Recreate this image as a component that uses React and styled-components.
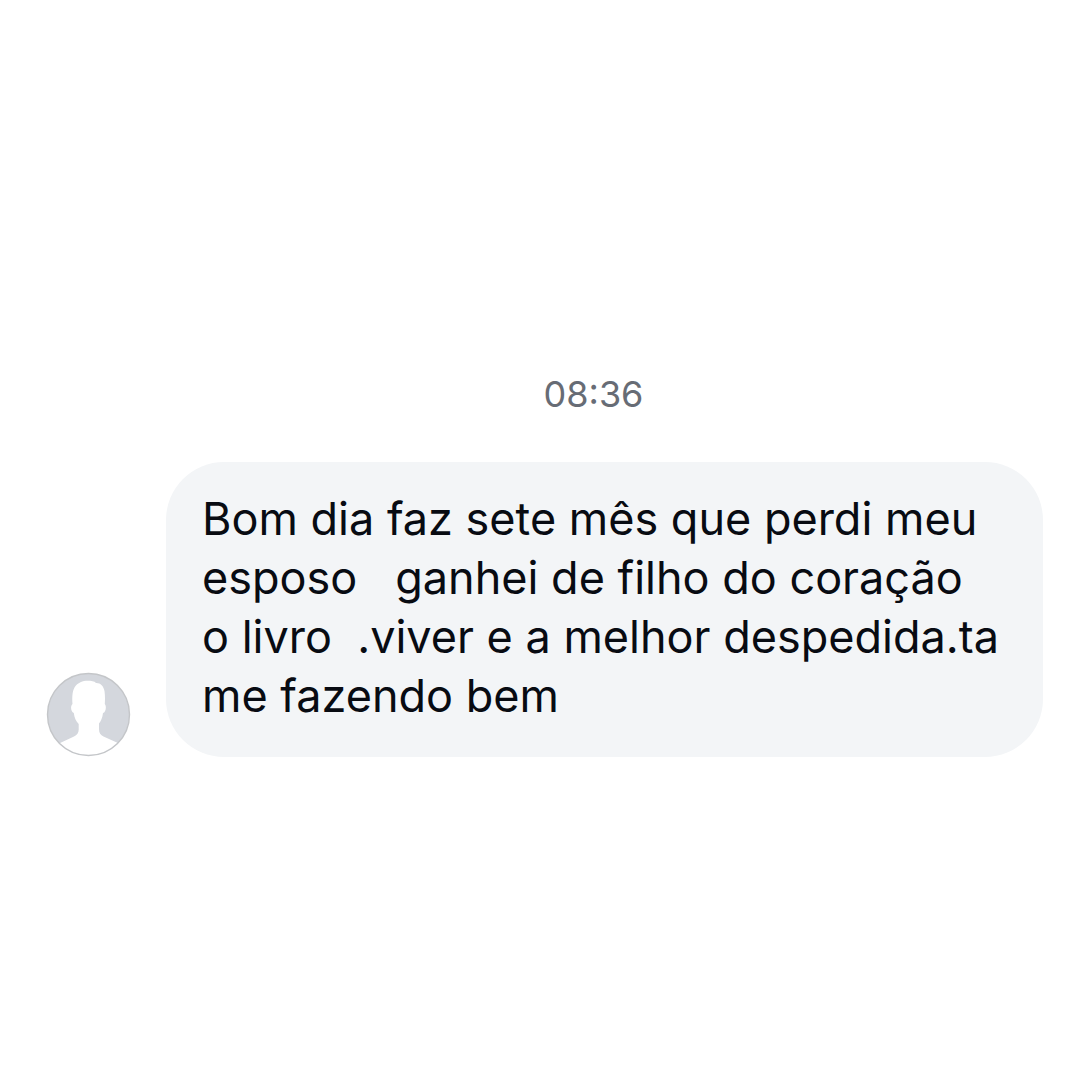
import styled, { createGlobalStyle } from "styled-components";

const GlobalStyle = createGlobalStyle`
  * {
    box-sizing: border-box;
  }
  body {
    margin: 0;
    background-color: #fff;
    font-family: Inter, "Liberation Sans", sans-serif;
  }
`;

const Thread = styled.main`
  display: flex;
  flex-direction: column;
  justify-content: center;
  min-height: 100vh;
  padding: 48px 37px 0 46px;
`;

const Time = styled.time`
  align-self: center;
  margin: 0 0 46px 98px;
  font-size: 36px;
  line-height: 44px;
  color: #676c75;
`;

const MessageRow = styled.article`
  display: flex;
  align-items: flex-end;
  gap: 35px;
`;

const Avatar = styled.svg`
  flex: none;
  width: 85px;
  height: 85px;
`;

const Bubble = styled.p`
  flex: 1;
  margin: 0;
  padding: 27px 36px 32px;
  border-radius: 58px;
  background-color: #f3f5f7;
  color: #080b12;
  font-size: 45px;
  line-height: 59px;
  white-space: pre-wrap;
`;

const message = `Bom dia faz sete mês que perdi meu
esposo   ganhei de filho do coração
o livro  .viver e a melhor despedida.ta
me fazendo bem`;

const App = () => {
  return (
    <>
      <GlobalStyle />
      <Thread>
        <Time dateTime="08:36">08:36</Time>
        <MessageRow>
          <Avatar viewBox="0 0 85 85" role="img" aria-label="Avatar">
            <defs>
              <clipPath id="avatar-clip">
                <circle cx="42.5" cy="42.5" r="41" />
              </clipPath>
            </defs>
            <circle cx="42.5" cy="42.5" r="41" fill="#d4d7dd" />
            <path
              clipPath="url(#avatar-clip)"
              fill="#fff"
              d="M26.5 32C26 27 26 20 28.5 15.5C31.5 10.5 37 8.8 41.5 8.8C45 8.8 48.5 9.2 50 11C54.5 10.8 57.5 14 58.5 19C59.2 24 59 28 58.8 32C60.8 34 59.8 40.5 57 41C56.5 45.5 55 49 53 51.5V57C53 61 54.5 63 57.5 64.5L73 71.5V85H13V71.5L28 64.5C31 63 32.7 61 32.7 57.5V52C30 49.5 28.3 45.5 27.8 41C25 40.5 24 34 26.5 32Z"
            />
            <circle
              cx="42.5"
              cy="42.5"
              r="41"
              fill="none"
              stroke="#c4c6c9"
              strokeWidth="1.4"
            />
          </Avatar>
          <Bubble>{message}</Bubble>
        </MessageRow>
      </Thread>
    </>
  );
};

export default App;
